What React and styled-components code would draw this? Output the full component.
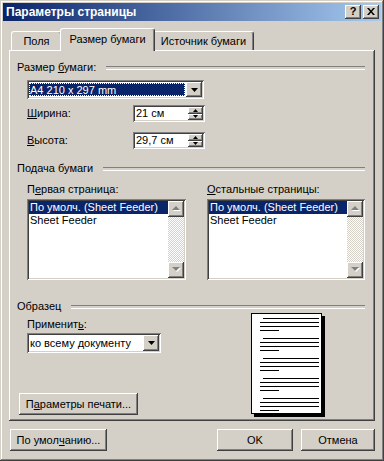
import React from "react";
import styled, { createGlobalStyle, css } from "styled-components";

const face = "#D4D0C8";
const light = "#FFFFFF";
const shadow = "#808080";
const dark = "#404040";
const navy = "#0A246A";

const raised = css`
  box-shadow: inset -1px -1px 0 ${dark}, inset 1px 1px 0 ${light},
    inset -2px -2px 0 ${shadow}, inset 2px 2px 0 ${face};
`;

const sunken = css`
  box-shadow: inset 1px 1px 0 ${shadow}, inset -1px -1px 0 ${light},
    inset 2px 2px 0 ${dark}, inset -2px -2px 0 ${face};
`;

const GlobalStyle = createGlobalStyle`
  html, body { margin: 0; padding: 0; background: ${face}; }
  body {
    font-family: "Liberation Sans", Arial, sans-serif;
    font-size: 11px;
    color: #000;
  }
  * { box-sizing: border-box; }
`;

const Window = styled.div`
  width: 384px;
  height: 461px;
  padding: 3px;
  display: flex;
  flex-direction: column;
  background: ${face};
  box-shadow: inset -1px -1px 0 ${dark}, inset 1px 1px 0 ${face},
    inset -2px -2px 0 ${shadow}, inset 2px 2px 0 ${light};
`;

const TitleBar = styled.div`
  height: 18px;
  flex-shrink: 0;
  display: flex;
  align-items: center;
  justify-content: space-between;
  padding: 0 2px 0 3px;
  background: linear-gradient(to right, ${navy}, #a6caf0);
  color: #fff;
  font-weight: bold;
  font-size: 12px;
`;

const TitleButtons = styled.div`
  display: flex;
  gap: 2px;
`;

const TitleButton = styled.div`
  width: 16px;
  height: 14px;
  background: ${face};
  ${raised};
  display: flex;
  align-items: center;
  justify-content: center;
  color: #000;
  font-weight: bold;
  font-size: 11px;
  line-height: 1;
  padding-bottom: 1px;
`;

const Content = styled.div`
  flex: 1;
  display: flex;
  flex-direction: column;
  padding: 7px 6px 0 6px;
`;

const TabStrip = styled.div`
  display: flex;
  align-items: flex-end;
  height: 22px;
  flex-shrink: 0;
  padding-left: 2px;
  position: relative;
  z-index: 1;
`;

const Tab = styled.div`
  width: ${(p) => p.$w}px;
  height: ${(p) => (p.$active ? 23 : 19)}px;
  margin: 0 ${(p) => (p.$active ? -2 : 0)}px ${(p) => (p.$active ? -1 : 0)}px;
  background: ${face};
  border-top: 1px solid ${light};
  border-left: 1px solid ${light};
  border-right: 1px solid ${dark};
  border-radius: 3px 3px 0 0;
  box-shadow: inset -1px 0 0 ${shadow};
  display: flex;
  justify-content: center;
  padding-top: ${(p) => (p.$active ? 4 : 3)}px;
  line-height: 13px;
  position: relative;
  z-index: ${(p) => (p.$active ? 2 : 1)};
`;

const Panel = styled.div`
  width: 366px;
  height: 371px;
  flex-shrink: 0;
  background: ${face};
  box-shadow: inset -1px -1px 0 ${dark}, inset 1px 1px 0 ${light},
    inset -2px -2px 0 ${shadow};
  padding: 11px 8px 0 8px;
  display: flex;
  flex-direction: column;
`;

const Heading = styled.div`
  display: flex;
  align-items: center;
  gap: 10px;
  height: 13px;
  flex-shrink: 0;
  line-height: 13px;
  margin-top: ${(p) => p.$top || 0}px;
  &::after {
    content: "";
    flex: 1;
    height: 2px;
    margin-right: 2px;
    border-top: 1px solid ${shadow};
    border-bottom: 1px solid ${light};
  }
`;

const Indent = styled.div`
  padding-left: 10px;
  margin-top: ${(p) => p.$top || 0}px;
`;

const Label = styled.div`
  height: 13px;
  line-height: 13px;
  white-space: nowrap;
`;

const Key = styled.span`
  text-decoration: underline;
`;

const Combo = styled.div`
  width: ${(p) => p.$w}px;
  height: ${(p) => p.$h}px;
  margin-top: ${(p) => p.$top || 0}px;
  display: flex;
  padding: 2px;
  background: #fff;
  ${sunken};
`;

const ComboValue = styled.div`
  flex: 1;
  display: flex;
  align-items: center;
  padding-left: 1px;
  margin: 1px 1px 1px 0;
  white-space: nowrap;
  ${(p) =>
    p.$selected &&
    css`
      background: ${navy};
      color: #fff;
      outline: 1px dotted #fff;
      outline-offset: -1px;
    `}
`;

const ArrowButton = styled.div`
  width: 16px;
  background: ${face};
  ${raised};
  display: flex;
  align-items: center;
  justify-content: center;
`;

const FieldRow = styled.div`
  display: flex;
  align-items: center;
  margin-top: ${(p) => p.$top}px;
`;

const FieldLabel = styled(Label)`
  width: 106px;
`;

const SpinField = styled.div`
  width: 72px;
  height: 17px;
  display: flex;
  padding: 2px;
  background: #fff;
  ${sunken};
`;

const SpinValue = styled.div`
  flex: 1;
  line-height: 13px;
  padding-left: 1px;
`;

const Spin = styled.div`
  width: 15px;
  display: flex;
  flex-direction: column;
`;

const SpinButton = styled.div`
  flex: 1;
  background: ${face};
  ${raised};
  display: flex;
  align-items: center;
  justify-content: center;
`;

const ListsRow = styled.div`
  display: grid;
  grid-template-columns: 159px 158px;
  column-gap: 21px;
  margin-top: 8px;
  padding-left: 10px;
`;

const ListBox = styled.div`
  margin-top: 3px;
  height: 81px;
  display: flex;
  padding: 2px;
  background: #fff;
  ${sunken};
`;

const ListItems = styled.div`
  flex: 1;
`;

const ListItem = styled.div`
  height: 13px;
  line-height: 13px;
  padding-left: 1px;
  white-space: nowrap;
  ${(p) =>
    p.$selected &&
    css`
      background: ${navy};
      color: #fff;
    `}
`;

const ScrollBar = styled.div`
  width: 16px;
  display: flex;
  flex-direction: column;
  background: repeating-conic-gradient(${light} 0 25%, ${face} 0 50%) 0 0 / 2px 2px;
`;

const ScrollButton = styled.div`
  height: 16px;
  background: ${face};
  ${raised};
  display: flex;
  align-items: center;
  justify-content: center;
`;

const Track = styled.div`
  flex: 1;
`;

const SampleRow = styled.div`
  flex: 1;
  min-height: 0;
  display: flex;
  padding-bottom: 6px;
`;

const SampleLeft = styled.div`
  width: 234px;
  display: flex;
  flex-direction: column;
`;

const Spacer = styled.div`
  flex: 1;
`;

const Button = styled.div`
  width: ${(p) => p.$w}px;
  height: 22px;
  flex-shrink: 0;
  margin-left: ${(p) => p.$left || 0}px;
  background: ${face};
  ${raised};
  display: flex;
  align-items: center;
  justify-content: center;
  white-space: nowrap;
`;

const Preview = styled.div`
  line-height: 0;
`;

const Footer = styled.div`
  display: flex;
  gap: 8px;
  margin-top: 8px;
  padding-left: 1px;
`;

const FooterGap = styled.div`
  flex: 1;
`;

const DownArrow = ({ w = 7, color = "#000" }) => (
  <svg width={w} height={Math.ceil(w / 2)} viewBox={`0 0 ${w} ${Math.ceil(w / 2)}`}>
    <polygon points={`0,0 ${w},0 ${w / 2},${Math.ceil(w / 2)}`} fill={color} />
  </svg>
);

const UpArrow = ({ w = 5 }) => (
  <svg width={w} height={Math.ceil(w / 2)} viewBox={`0 0 ${w} ${Math.ceil(w / 2)}`}>
    <polygon points={`${w / 2},0 ${w},${Math.ceil(w / 2)} 0,${Math.ceil(w / 2)}`} fill="#000" />
  </svg>
);

const DisabledArrow = ({ up }) => (
  <svg width="9" height="6" viewBox="0 0 9 6">
    {up ? (
      <>
        <polygon points="5,1 9,5 1,5" fill={light} />
        <polygon points="4,0 8,4 0,4" fill={shadow} />
      </>
    ) : (
      <>
        <polygon points="1,1 9,1 5,5" fill={light} />
        <polygon points="0,0 8,0 4,4" fill={shadow} />
      </>
    )}
  </svg>
);

const CloseGlyph = () => (
  <svg width="8" height="7" viewBox="0 0 8 7">
    <path d="M0 0h2l2 2.5L6 0h2L5 3.5 8 7H6L4 4.5 2 7H0l3-3.5z" fill="#000" />
  </svg>
);

const PageSample = () => {
  const blocks = [0, 1, 2, 3, 4];
  return (
    <svg width="74" height="104" viewBox="0 0 74 104">
      <rect x="3" y="3" width="71" height="101" fill="#000" />
      <rect x="0.5" y="0.5" width="70" height="100" fill="#fff" stroke="#000" />
      {blocks.map((b) => {
        const y = 5 + b * 20;
        return (
          <g key={b} fill="#000">
            <rect x="12" y={y} width="56" height="1" />
            <rect x="9" y={y + 4} width="59" height="1" />
            <rect x="9" y={y + 8} width="59" height="1" />
            <rect x="9" y={y + 12} width="19" height="1" />
          </g>
        );
      })}
    </svg>
  );
};

const Feeder = ({ label }) => (
  <div>
    <Label>{label}</Label>
    <ListBox>
      <ListItems>
        <ListItem $selected>По умолч. (Sheet Feeder)</ListItem>
        <ListItem>Sheet Feeder</ListItem>
      </ListItems>
      <ScrollBar>
        <ScrollButton>
          <DisabledArrow up />
        </ScrollButton>
        <Track />
        <ScrollButton>
          <DisabledArrow />
        </ScrollButton>
      </ScrollBar>
    </ListBox>
  </div>
);

const SizeField = ({ label, value, top }) => (
  <FieldRow $top={top}>
    <FieldLabel>{label}</FieldLabel>
    <SpinField>
      <SpinValue>{value}</SpinValue>
      <Spin>
        <SpinButton>
          <UpArrow />
        </SpinButton>
        <SpinButton>
          <DownArrow w={5} />
        </SpinButton>
      </Spin>
    </SpinField>
  </FieldRow>
);

export default function App() {
  return (
    <>
      <GlobalStyle />
      <Window>
        <TitleBar>
          <span>Параметры страницы</span>
          <TitleButtons>
            <TitleButton>?</TitleButton>
            <TitleButton>
              <CloseGlyph />
            </TitleButton>
          </TitleButtons>
        </TitleBar>
        <Content>
          <TabStrip>
            <Tab $w={51}>Поля</Tab>
            <Tab $w={95} $active>
              Размер бумаги
            </Tab>
            <Tab $w={101}>Источник бумаги</Tab>
          </TabStrip>
          <Panel>
            <Heading>
              <span>
                Размер <Key>б</Key>умаги:
              </span>
            </Heading>
            <Indent $top={6}>
              <Combo $w={177} $h={19}>
                <ComboValue $selected>A4 210 x 297 mm</ComboValue>
                <ArrowButton>
                  <DownArrow />
                </ArrowButton>
              </Combo>
              <SizeField
                top={6}
                label={
                  <>
                    <Key>Ш</Key>ирина:
                  </>
                }
                value="21 см"
              />
              <SizeField
                top={10}
                label={
                  <>
                    <Key>В</Key>ысота:
                  </>
                }
                value="29,7 см"
              />
            </Indent>

            <Heading $top={13}>
              <span>Подача бумаги</span>
            </Heading>
            <ListsRow>
              <Feeder
                label={
                  <>
                    П<Key>е</Key>рвая страница:
                  </>
                }
              />
              <Feeder
                label={
                  <>
                    <Key>О</Key>стальные страницы:
                  </>
                }
              />
            </ListsRow>

            <Heading $top={20}>
              <span>Образец</span>
            </Heading>
            <SampleRow>
              <SampleLeft>
                <Indent $top={5}>
                  <Label>
                    Применит<Key>ь</Key>:
                  </Label>
                  <Combo $w={134} $h={20} $top={2}>
                    <ComboValue>ко всему документу</ComboValue>
                    <ArrowButton>
                      <DownArrow />
                    </ArrowButton>
                  </Combo>
                </Indent>
                <Spacer />
                <Button $w={119} $left={2}>
                  П<Key>а</Key>раметры печати...
                </Button>
              </SampleLeft>
              <Preview>
                <PageSample />
              </Preview>
            </SampleRow>
          </Panel>
          <Footer>
            <Button $w={97}>
              По умол<Key>ч</Key>анию...
            </Button>
            <FooterGap />
            <Button $w={76}>OK</Button>
            <Button $w={74}>Отмена</Button>
          </Footer>
        </Content>
      </Window>
    </>
  );
}
